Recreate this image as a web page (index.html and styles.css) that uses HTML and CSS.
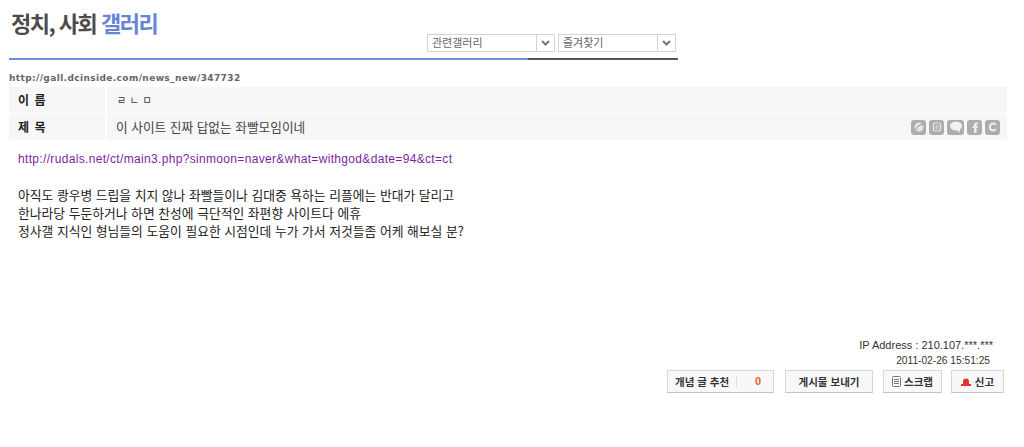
FILE: index.html
```html
<!DOCTYPE html>
<html lang="ko">
<head>
<meta charset="utf-8">
<title>정치, 사회 갤러리</title>
<link rel="stylesheet" href="styles.css">
</head>
<body>
<div class="page">
  <header class="head">
    <h1 class="title">정치, 사회 <span class="title-accent">갤러리</span></h1>
    <div class="selects">
      <div class="select select-a"><span class="select-text">관련갤러리</span><span class="select-btn"><svg width="9" height="6" viewBox="0 0 9 6"><path d="M1 1l3.5 3.5L8 1" fill="none" stroke="#777" stroke-width="2"/></svg></span></div>
      <div class="select select-b"><span class="select-text">즐겨찾기</span><span class="select-btn"><svg width="9" height="6" viewBox="0 0 9 6"><path d="M1 1l3.5 3.5L8 1" fill="none" stroke="#777" stroke-width="2"/></svg></span></div>
    </div>
  </header>
  <div class="rule"><div class="rule-blue"></div><div class="rule-dark"></div></div>
  <div class="url">http://gall.dcinside.com/news_new/347732</div>
  <div class="row row-name">
    <div class="label">이 름</div>
    <div class="value value-small">ㄹㄴㅁ</div>
  </div>
  <div class="row row-subject">
    <div class="label">제 목</div>
    <div class="value">이 사이트 진짜 답없는 좌빨모임이네</div>
    <div class="shares">
      <span class="share"><svg width="10" height="10" viewBox="0 0 10 10"><circle cx="5" cy="5" r="4.500" fill="#e4e4e4"/><path d="M2 8C3 4 6 3 9 2" stroke="#888" fill="none"/></svg></span>
      <span class="share"><svg width="10" height="10" viewBox="0 0 10 10"><rect x="1.500" y="1" width="7" height="8" rx="1.500" fill="none" stroke="#e8e8e8" stroke-width="1.200"/><path d="M3.500 4h3M3.500 6h3" stroke="#e8e8e8"/></svg></span>
      <span class="share share-wide"><svg width="14" height="12" viewBox="0 0 14 12"><ellipse cx="7" cy="5" rx="6" ry="4.500" fill="#f2f2f2"/><path d="M8 9l3 2.500V7z" fill="#f2f2f2"/></svg></span>
      <span class="share"><svg width="10" height="12" viewBox="0 0 10 12"><path d="M4 12V7H2.500V5H4V3.500C4 2 5 1.500 6 1.500H8V3.500H6.500V5H8L7.700 7H6.500V12z" fill="#ececec"/></svg></span>
      <span class="share"><svg width="10" height="10" viewBox="0 0 10 10"><path d="M7.800 2.800A3.400 3.400 0 1 0 7.800 7.200" fill="none" stroke="#f0f0f0" stroke-width="2"/></svg></span>
    </div>
  </div>
  <main class="content">
    <p class="link">http://rudals.net/ct/main3.php?sinmoon=naver&amp;what=withgod&amp;date=94&amp;ct=ct</p>
    <p class="line">아직도 쾅우병 드립을 치지 않나 좌빨들이나 김대중 욕하는 리플에는 반대가 달리고</p>
    <p class="line">한나라당 두둔하거나 하면 찬성에 극단적인 좌편향 사이트다 에휴</p>
    <p class="line">정사갤 지식인 형님들의 도움이 필요한 시점인데 누가 가서 저것들좀 어케 해보실 분?</p>
  </main>
  <div class="meta">
    <div class="ip">IP Address : 210.107.***.***</div>
    <div class="date">2011-02-26 15:51:25</div>
  </div>
  <div class="actions">
    <button class="btn btn-rec"><span class="rec-label">개념 글 추천</span><span class="rec-count">0</span></button>
    <button class="btn btn-send">게시물 보내기</button>
    <button class="btn btn-scrap"><svg width="9" height="11" viewBox="0 0 9 11"><rect x=".5" y=".5" width="8" height="10" rx="1" fill="none" stroke="#777"/><path d="M2 3.500h5M2 5.500h5M2 7.500h5" stroke="#777"/></svg>스크랩</button>
    <button class="btn btn-report"><svg width="10" height="9" viewBox="0 0 10 9"><path d="M2 7V4.500a3 3 0 0 1 6 0V7z" fill="#e0342c"/><rect y="7" width="10" height="2" fill="#e0342c"/></svg>신고</button>
  </div>
</div>
</body>
</html>
```
FILE: styles.css
```css
* { box-sizing: border-box; }
html, body { margin: 0; padding: 0; background: #fff; }
body { font-family: "Noto Sans CJK KR", "Liberation Sans", sans-serif; color: #222; height: 447px; overflow: hidden; }
.page { width: 1024px; padding: 0 17px 0 9px; }
.head { height: 58px; position: relative; width: 669px; display: flex; justify-content: flex-end; padding-top: 34px; }
.title { position: absolute; left: 2px; top: 6px; margin: 0; font-size: 22px; line-height: 32px; font-weight: 700; letter-spacing: -1.5px; color: #4c4c4c; }
.title-accent { color: #6585d8; font-weight: 700; }
.selects { display: flex; gap: 3px; height: 18px; margin-right: 2px; }
.select { height: 18px; border: 1px solid #d4d4d4; display: flex; font-size: 11px; line-height: 15px; color: #666; background: #fff; }
.select-a { width: 128px; }
.select-b { width: 118px; }
.select-text { flex: 1; padding-left: 4px; }
.select-btn { width: 18px; border-left: 1px solid #d4d4d4; display: flex; align-items: center; justify-content: center; }
.rule { display: flex; width: 669px; height: 2px; }
.rule-blue { width: 519px; background: #6a8de0; }
.rule-dark { flex: 1; background: #555; }
.url { margin-top: 12px; height: 13px; font-family: "DejaVu Sans", sans-serif; font-weight: 700; font-size: 9px; line-height: 12px; color: #666; letter-spacing: .39px; }
.row { display: flex; align-items: center; background: #f7f7f7; width: 998px; position: relative; }
.row-name { height: 26px; margin-top: 2px; }
.row-subject { height: 26px; margin-top: 1px; }
.label { width: 98px; height: 100%; padding-left: 9px; font-size: 12px; font-weight: 700; line-height: 26px; color: #222; border-right: 2px solid #fff; white-space: pre; word-spacing: 2px; }
.value { padding-left: 9px; font-size: 12.7px; color: #444; flex: 1; line-height: 24px; }
.value-small { font-size: 10px; letter-spacing: 3.5px; padding-left: 10px; color: #333; }
.shares { display: flex; gap: 3px; margin-right: 7px; }
.share { width: 15px; height: 15px; border-radius: 3px; background: #adadad; display: flex; align-items: center; justify-content: center; }
.share-wide { width: 17px; }
.content { padding: 10px 0 0 9px; height: 196px; font-size: 12.8px; line-height: 18px; color: #222; }
.content p { margin: 0; white-space: nowrap; }
.link { color: #7b1fa2; margin-bottom: 18px !important; font-family: "Liberation Sans", sans-serif; font-size: 12px; letter-spacing: .33px; }
.meta { width: 984px; text-align: right; font-size: 11px; font-family: "Liberation Sans", sans-serif; color: #333; line-height: 16px; padding-top: 1px; }
.date { margin-right: 3px; font-size: 10.2px; }
.actions { display: flex; justify-content: flex-end; width: 995px; margin-top: 1px; }
.btn { height: 23px; background: #f8f8f8; border: 1px solid #d8d8d8; border-bottom-color: #c4c4c4; font: 700 10.5px/21px "Noto Sans CJK KR", sans-serif; color: #333; padding: 0; display: flex; align-items: center; justify-content: center; gap: 3px; }
.btn-rec { width: 107px; justify-content: flex-start; padding-left: 7px; margin-right: 11px; }
.rec-label { width: 62px; border-right: 1px solid #ddd; line-height: 11px; text-align: left; white-space: nowrap; }
.rec-count { color: #e8641e; margin-left: 15px; font-family: "Liberation Sans", sans-serif; font-size: 11px; }
.btn-send { width: 88px; margin-right: 10px; }
.btn-scrap { width: 59px; margin-right: 9px; }
.btn-report { width: 53px; gap: 4px; }
```
